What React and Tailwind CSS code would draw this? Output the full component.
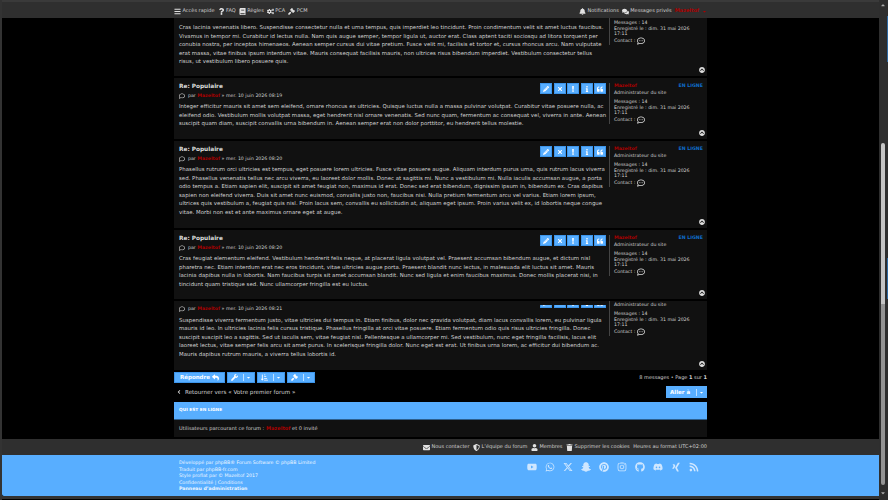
import {
  FaBars, FaQuestion, FaBook, FaCogs, FaGavel, FaBell, FaComments, FaCaretDown, FaCaretUp, FaPencilAlt, FaTimes,
  FaExclamation, FaInfo, FaQuoteLeft, FaRegComment, FaRegCommentDots, FaChevronCircleUp, FaReply, FaWrench,
  FaSortAmountDownAlt, FaAngleLeft, FaEnvelope, FaShieldAlt, FaUser, FaTrash, FaYoutube, FaWhatsapp, FaSnapchatGhost,
  FaPinterest, FaInstagram, FaGithub, FaDiscord, FaXing, FaRss,
} from 'react-icons/fa';
import { FaXTwitter } from 'react-icons/fa6';

const posts = [
  {
    time: '08:18',
    height: 'h-[77px]',
    lines: [
      'Cras lacinia venenatis libero. Suspendisse consectetur nulla et urna tempus, quis imperdiet leo tincidunt. Proin condimentum velit sit amet luctus faucibus.',
      'Vivamus in tempor mi. Curabitur id lectus nulla. Nam quis augue semper, tempor ligula ut, auctor erat. Class aptent taciti sociosqu ad litora torquent per',
      'conubia nostra, per inceptos himenaeos. Aenean semper cursus dui vitae pretium. Fusce velit mi, facilisis et tortor et, cursus rhoncus arcu. Nam vulputate',
      'erat massa, vitae finibus ipsum interdum vitae. Mauris consequat facilisis mauris, non ultrices risus bibendum imperdiet. Vestibulum consectetur tellus',
      'risus, ut vestibulum libero posuere quis.',
    ],
  },
  {
    time: '08:19',
    height: 'h-[61px]',
    lines: [
      'Integer efficitur mauris sit amet sem eleifend, ornare rhoncus ex ultricies. Quisque luctus nulla a massa pulvinar volutpat. Curabitur vitae posuere nulla, ac',
      'eleifend odio. Vestibulum mollis volutpat massa, eget hendrerit nisl ornare venenatis. Sed nunc quam, fermentum ac consequat vel, viverra in ante. Aenean',
      'suscipit quam diam, suscipit convallis urna bibendum in. Aenean semper erat non dolor porttitor, eu hendrerit tellus molestie.',
    ],
  },
  {
    time: '08:20',
    height: 'h-[87px]',
    lines: [
      'Phasellus rutrum orci ultricies est tempus, eget posuere lorem ultricies. Fusce vitae posuere augue. Aliquam interdum purus urna, quis rutrum lacus viverra',
      'sed. Phasellus venenatis tellus nec arcu viverra, eu laoreet dolor mollis. Donec at sagittis mi. Nunc a vestibulum mi. Nulla iaculis accumsan augue, a porta',
      'odio tempus a. Etiam sapien elit, suscipit sit amet feugiat non, maximus id erat. Donec sed erat bibendum, dignissim ipsum in, bibendum ex. Cras dapibus',
      'sapien non eleifend viverra. Duis sit amet nunc euismod, convallis justo non, faucibus nisi. Nulla pretium fermentum arcu vel varius. Etiam lorem ipsum,',
      'ultrices quis vestibulum a, feugiat quis nisl. Proin lacus sem, convallis eu sollicitudin at, aliquam eget ipsum. Proin varius velit ex, id lobortis neque congue',
      'vitae. Morbi non est et ante maximus ornare eget at augue.',
    ],
  },
  {
    time: '08:20',
    height: 'h-[69px]',
    lines: [
      'Cras feugiat elementum eleifend. Vestibulum hendrerit felis neque, at placerat ligula volutpat vel. Praesent accumsan bibendum augue, et dictum nisl',
      'pharetra nec. Etiam interdum erat nec eros tincidunt, vitae ultricies augue porta. Praesent blandit nunc lectus, in malesuada elit luctus sit amet. Mauris',
      'lacinia dapibus nulla in lobortis. Nam faucibus turpis sit amet accumsan blandit. Nunc sed ligula et enim faucibus maximus. Donec mollis placerat nisi, in',
      'tincidunt quam tristique sed. Nunc ullamcorper fringilla est eu luctus.',
    ],
  },
];

const lastPost = [
  'Suspendisse viverra fermentum justo, vitae ultricies dui tempus in. Etiam finibus, dolor nec gravida volutpat, diam lacus convallis lorem, eu pulvinar ligula',
  'mauris id leo. In ultricies lacinia felis cursus tristique. Phasellus fringilla at orci vitae posuere. Etiam fermentum odio quis risus ultricies fringilla. Donec',
  'suscipit suscipit leo a sagittis. Sed ut iaculis sem, vitae feugiat nisl. Pellentesque a ullamcorper mi. Sed vestibulum, nunc eget fringilla facilisis, lacus elit',
  'laoreet lectus, vitae semper felis arcu sit amet purus. In scelerisque fringilla dolor. Nunc eget est erat. Ut finibus urna lorem, ac efficitur dui bibendum ac.',
  'Mauris dapibus rutrum mauris, a viverra tellus lobortis id.',
];

function PostMeta({ time }) {
  return (
    <div className="flex items-center h-[10px] text-[4.7px] text-[#d0d0d0]">
      <FaRegComment className="text-[6px] mr-[3px] text-[#ddd]" />
      <span>par&nbsp;</span>
      <span className="font-bold text-[#aa0000]">Mazeltof</span>
      <span>&nbsp;» mer. 10 juin 2026 {time}</span>
    </div>
  );
}

function PostText({ lines }) {
  return (
    <div className="text-[5.4px] tracking-[0.03px] leading-[8.5px] text-[#d4d4d4] whitespace-nowrap">
      {lines.map((line) => (
        <div key={line}>{line}</div>
      ))}
    </div>
  );
}

function PostButtons() {
  const icons = [FaPencilAlt, FaTimes, FaExclamation, FaInfo, FaQuoteLeft];
  return (
    <div className="flex gap-[1.5px]">
      {icons.map((Icon, i) => (
        <div key={i} className="w-[12px] h-[11px] bg-[#58aeff] border border-[#3d95ea] flex items-center justify-center text-white text-[6px]">
          <Icon />
        </div>
      ))}
    </div>
  );
}

function Profile({ clipped, hideTop }) {
  return (
    <div className="w-[89px] text-[4.7px] text-[#d0d0d0] whitespace-nowrap">
      {!clipped && (
        <div className={`flex justify-between items-start h-[6px] leading-[6px] ${hideTop ? 'invisible' : ''}`}>
          <div className="font-bold text-[#aa0000]">Mazeltof</div>
          <div className="font-bold text-[#0f6cc9]">EN LIGNE</div>
        </div>
      )}
      <div className={`leading-[6px] mt-[0.5px] ${hideTop ? 'invisible' : ''}`}>Administrateur du site</div>
      <div className="mt-[3.5px] leading-[5.6px]">Messages : 14</div>
      <div className="leading-[5.6px]">Enregistré le : dim. 31 mai 2026</div>
      <div className="leading-[5.6px]">17:11</div>
      <div className="flex items-center leading-[6px]">
        Contact :<FaRegCommentDots className="ml-[2px] text-[8px] text-[#ddd]" />
      </div>
    </div>
  );
}

// the first post sits partly under the fixed top bar, its head is not seen
function Post({ post, hideTop }) {
  return (
    <div className={`relative flex bg-[#111111] shrink-0 pl-[5px] pr-[4px] mb-[2px] ${post.height}`}>
      <div className="w-[430px] shrink-0 pt-[3px]">
        <div className={`flex justify-between pr-[3px] ${hideTop ? 'invisible' : ''}`}>
          <div>
            <div className="text-[5.8px] leading-[10px] font-bold text-[#dddddd]">Re: Populaire</div>
            <PostMeta time={post.time} />
          </div>
          <div className="pt-[2px]">
            <PostButtons />
          </div>
        </div>
        <div className="mt-[1px]">
          <PostText lines={post.lines} />
        </div>
      </div>
      <div className="pl-[4px] border-l border-[#444] h-[41px] mt-[5px]">
        <Profile hideTop={hideTop} />
      </div>
      <FaChevronCircleUp className="absolute right-[2px] bottom-[3px] text-[6px] text-[#ddd]" />
    </div>
  );
}

function ClippedPost() {
  return (
    <div className="relative flex bg-[#111111] h-[69px] shrink-0 pl-[5px] pr-[4px] overflow-hidden">
      <div className="w-[430px] shrink-0">
        <div className="flex justify-between pr-[3px]">
          <div className="pt-[3px]">
            <PostMeta time="08:21" />
          </div>
          <div className="h-[3px] mt-[4px] overflow-hidden flex items-end">
            <PostButtons />
          </div>
        </div>
        <div className="mt-[1.5px]">
          <PostText lines={lastPost} />
        </div>
      </div>
      <div className="pl-[4px] border-l border-[#444] h-[35px]">
        <Profile clipped />
      </div>
      <FaChevronCircleUp className="absolute right-[2px] bottom-[3px] text-[6px] text-[#ddd]" />
    </div>
  );
}

function SplitButton({ Icon, className = 'w-[28px]' }) {
  return (
    <div className={`h-[11px] bg-[#58aeff] border border-[#3d95ea] flex items-center justify-between px-[3px] text-white ${className}`}>
      <Icon className="text-[7px]" />
      <span className="flex items-center border-l border-white/60 pl-[2px] h-[7px]">
        <FaCaretDown className="text-[5px]" />
      </span>
    </div>
  );
}

function NavItem({ Icon, children, className = '' }) {
  return (
    <span className={`flex items-center gap-[1.5px] ${className}`}>
      <Icon className="text-[7px] text-[#e2e2e2]" />
      {children}
    </span>
  );
}

export default function App() {
  const font = { fontFamily: '"DejaVu Sans", sans-serif' };
  return (
    <div style={font} className="relative flex h-[500px] w-[888px] overflow-hidden bg-black">
      <div className="w-[2px] h-[500px] bg-[#333333] shrink-0" />
      <div className="relative w-[877px] h-[500px] flex flex-col overflow-hidden">
        {/* fixed top bar */}
        <div className="absolute inset-x-0 top-0 h-[18px] z-10 bg-[#2f2f2f] border-t-2 border-[#3a3a3a] flex items-center justify-between pt-[2px] pl-[172px] pr-[172px] text-[5px] text-[#d0d0d0]">
          <div className="flex gap-[3px]">
            <NavItem Icon={FaBars}>Accès rapide</NavItem>
            <NavItem Icon={FaQuestion}>FAQ</NavItem>
            <NavItem Icon={FaBook}>Règles</NavItem>
            <NavItem Icon={FaCogs}>PCA</NavItem>
            <NavItem Icon={FaGavel}>PCM</NavItem>
          </div>
          <div className="flex gap-[3px]">
            <NavItem Icon={FaBell}>Notifications</NavItem>
            <NavItem Icon={FaComments}>Messages privés</NavItem>
            <span className="flex items-center gap-[3px] font-bold text-[#aa0000]">
              Mazeltof <FaCaretDown className="text-[5px]" />
            </span>
          </div>
        </div>

        {/* content column */}
        <div className="w-[533px] ml-[172px] mt-[-1px] shrink-0 flex flex-col">
          {posts.map((post, i) => (
            <Post key={i} post={post} hideTop={i === 0} />
          ))}
          <ClippedPost />

          <div className="flex justify-between items-center mt-[2px] h-[11px]">
            <div className="flex gap-[2px]">
              <div className="w-[51px] h-[11px] bg-[#58aeff] border border-[#3d95ea] flex items-center justify-center gap-[2px] text-white text-[5.5px] font-bold">
                Répondre <FaReply className="text-[7px]" />
              </div>
              <SplitButton Icon={FaWrench} />
              <SplitButton Icon={FaSortAmountDownAlt} />
              <SplitButton Icon={FaGavel} />
            </div>
            <div className="text-[5px] text-[#d0d0d0]">
              8 messages • Page <b>1</b> sur <b>1</b>
            </div>
          </div>

          <div className="flex justify-between items-center mt-[3px] h-[12px]">
            <div className="flex items-center gap-[3px] text-[5.6px] text-[#d0d0d0] pl-[2px]">
              <FaAngleLeft className="text-[6px]" /> Retourner vers « Votre premier forum »
            </div>
            <div className="w-[41px] h-[12px] bg-[#58aeff] flex items-center justify-between pl-[4px] pr-[3px] text-white text-[5.5px] font-bold">
              Aller à
              <span className="flex items-center border-l border-white/60 pl-[2px] h-[7px]">
                <FaCaretDown className="text-[5px]" />
              </span>
            </div>
          </div>

          <div className="mt-[4px] h-[18px] bg-[#58aeff] border-b border-[#2d5f8e] flex items-center pl-[5px] text-[4.3px] font-bold text-white">
            QUI EST EN LIGNE
          </div>
          <div className="h-[17px] bg-[#111111] flex items-center pl-[5px] text-[5.05px] text-[#d0d0d0]">
            Utilisateurs parcourant ce forum :&nbsp;<span className="font-bold text-[#aa0000]">Mazeltof</span>&nbsp;et 0 invité
          </div>
        </div>

        {/* footer */}
        <div className="mt-[2px] h-[16px] bg-[#2f2f2f] flex items-center justify-end gap-[3.5px] pr-[172px] text-[5px] text-[#d0d0d0]">
          <NavItem Icon={FaEnvelope}>Nous contacter</NavItem>
          <NavItem Icon={FaShieldAlt}>L’équipe du forum</NavItem>
          <NavItem Icon={FaUser}>Membres</NavItem>
          <NavItem Icon={FaTrash}>Supprimer les cookies</NavItem>
          <span>Heures au format UTC+02:00</span>
        </div>
        <div className="h-[41px] bg-[#58aeff] rounded-bl-[2px] flex justify-between pl-[177px] pr-[180px] text-white">
          <div className="pt-[5px] text-[4.7px] leading-[6.5px] text-[#eef7ff]">
            <div>Développé par phpBB® Forum Software © phpBB Limited</div>
            <div>Traduit par phpBB-fr.com</div>
            <div>Style proflat par © Mazeltof 2017</div>
            <div>Confidentialité | Conditions</div>
            <div className="font-bold">Panneau d’administration</div>
          </div>
          <div className="flex gap-[8px] pt-[7px] text-[10px] text-[#cfe7ff]">
            <FaYoutube />
            <FaWhatsapp />
            <FaXTwitter />
            <FaSnapchatGhost />
            <FaPinterest />
            <FaInstagram />
            <FaGithub />
            <FaDiscord />
            <FaXing />
            <FaRss />
          </div>
        </div>
        <div className="h-[3px] bg-[#333333]" />
      </div>

      {/* scrollbar */}
      <div className="relative w-[9px] h-[500px] bg-[#2e2e2e] flex flex-col items-center pr-[1px]">
        <FaCaretUp className="text-[6px] text-[#aaa] mt-[2px]" />
        <div className="w-[4px] h-[161px] mt-[135px] bg-[#c4c4c4] rounded-t-[2px]" />
        <div className="w-[4px] h-[181px] bg-[#949494] rounded-b-[2px]" />
        <FaCaretDown className="text-[6px] text-[#aaa] mt-[5px]" />
        <div className="absolute right-0 top-[16px] w-[1px] h-[46px] bg-[#2f6aa3]" />
        <div className="absolute right-0 top-[258px] w-[1px] h-[41px] bg-[#2f6aa3]" />
      </div>
    </div>
  );
}
